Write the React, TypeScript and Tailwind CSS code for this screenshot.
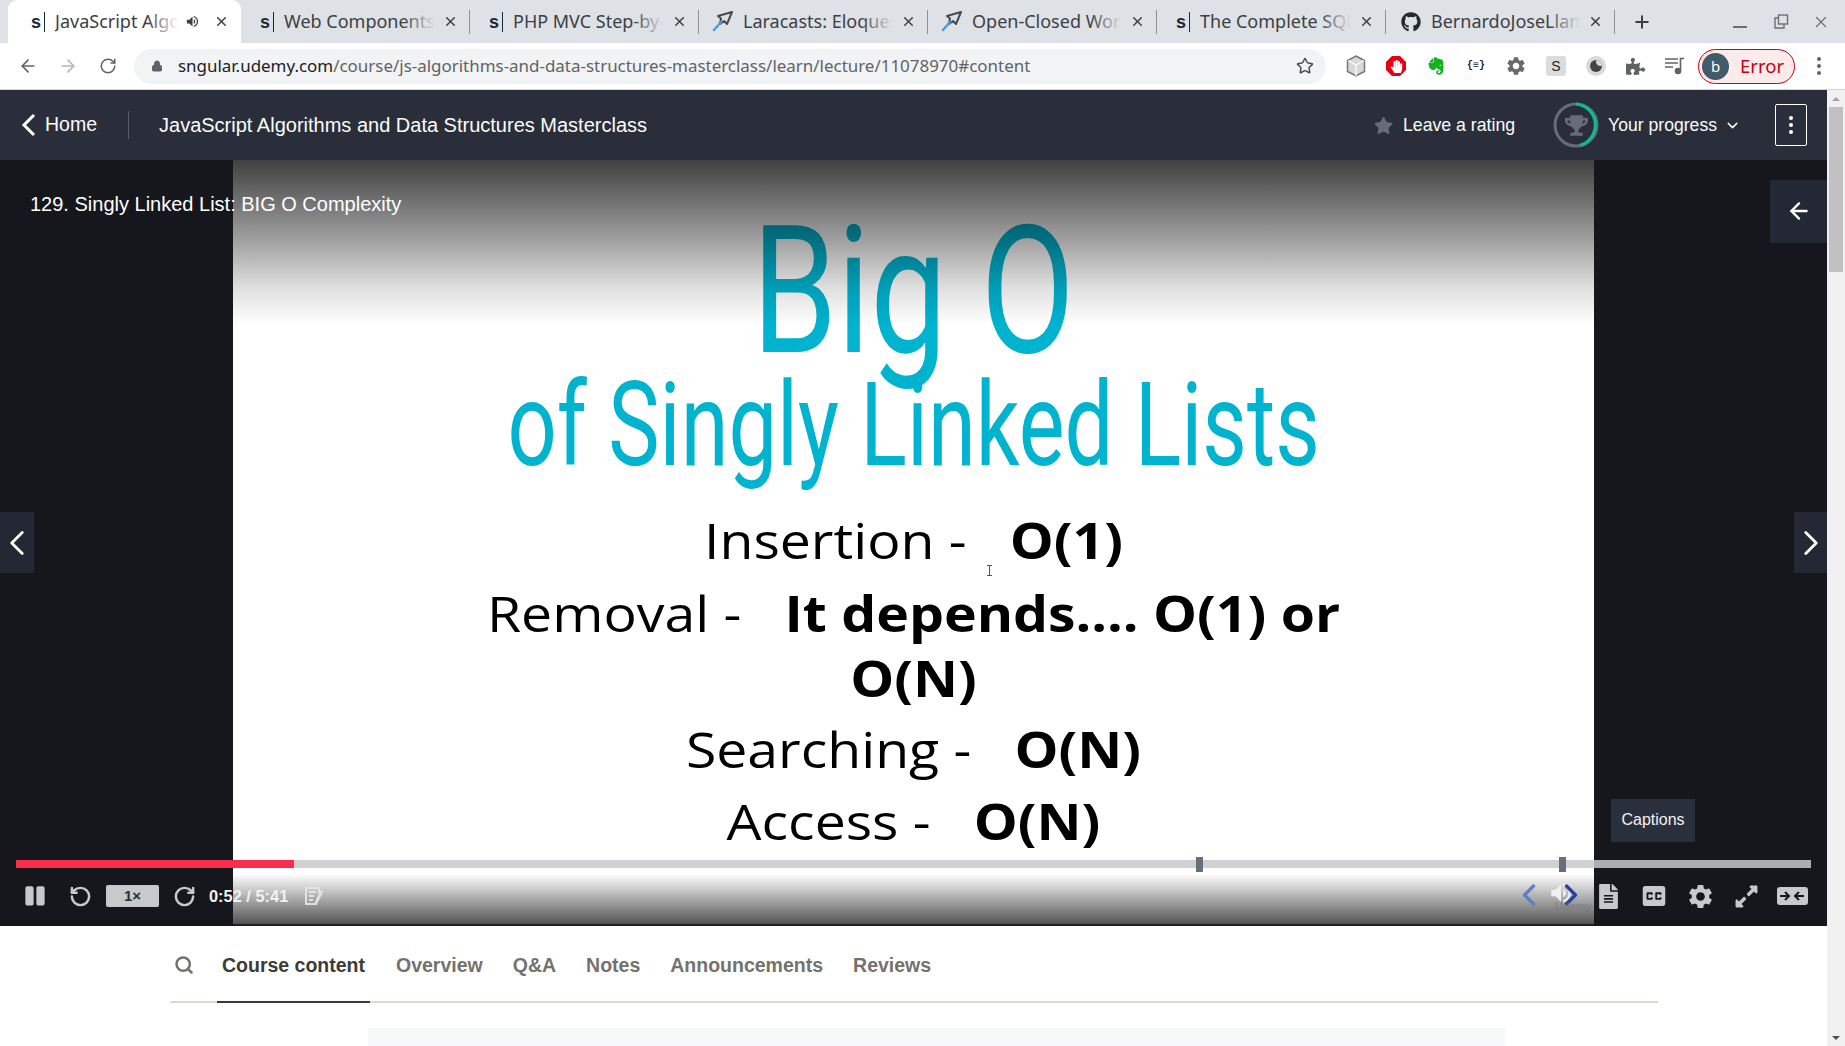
import { ArrowLeft, ArrowRight, ChevronDown, ChevronLeft, ChevronRight, Lock, Plus, RotateCcw, RotateCw, Search, Star, X } from 'lucide-react';
import { FaEvernote, FaFileAlt, FaGithub, FaHandPaper, FaPuzzlePiece, FaStar, FaTrophy, FaExpandAlt, FaPause } from 'react-icons/fa';
import { MdClosedCaption, MdSettings, MdVolumeUp } from 'react-icons/md';

function SFavicon() {
  return (
    <span className="flex w-[18px] shrink-0 items-center font-['Liberation_Sans',sans-serif] text-[18px] font-bold leading-none text-[#1c2a3a]">
      s<span className="ml-[3px] h-[20px] w-px bg-[#1c2a3a]" />
    </span>
  );
}

function PlaneFavicon() {
  return (
    <svg width="21" height="21" viewBox="0 0 21 21" className="-ml-[6px] mr-[4px] shrink-0">
      <path d="M20 1 6 5l3 2.500L8 13l4-3 3 3z" fill="none" stroke="#4a4a4a" strokeWidth="2" strokeLinejoin="round" />
      <path d="M9 11 2 19" stroke="#3f9be8" strokeWidth="2.500" strokeLinecap="round" strokeDasharray="3 2" />
    </svg>
  );
}

function BrowserTab({ title, icon, active, sound }: { title: string; icon: React.ReactNode; active?: boolean; sound?: boolean }) {
  return (
    <div className={active ? 'ml-2 flex h-[43px] w-[233px] items-center rounded-t-[9px] bg-white pl-[23px] pr-[12px]' : 'relative flex h-[43px] w-[229px] items-center pl-[19px] pr-[12px]'}>
      {icon}
      <div className="relative ml-[6px] min-w-0 flex-1 overflow-hidden whitespace-nowrap text-[18px] text-[#3c4043]">
        {title}
        <span className={active ? 'absolute inset-y-0 right-0 w-8 bg-gradient-to-r from-transparent to-white' : 'absolute inset-y-0 right-0 w-8 bg-gradient-to-r from-transparent to-[#dee1e6]'} />
      </div>
      {sound && <MdVolumeUp className="mx-[6px] shrink-0 text-[#3c4043]" size={15} />}
      <X className="ml-[8px] shrink-0 text-[#3c4043]" size={15} strokeWidth={2.4} />
      {!active && <span className="absolute right-0 top-[10px] h-[24px] w-px bg-[#8f9196]" />}
    </div>
  );
}

function TabStrip() {
  return (
    <div className="flex h-[43px] items-center bg-[#dee1e6] font-['Noto_Sans',sans-serif]">
      <BrowserTab active sound title="JavaScript Algorithms" icon={<SFavicon />} />
      <BrowserTab title="Web Components" icon={<SFavicon />} />
      <BrowserTab title="PHP MVC Step-by-Step" icon={<SFavicon />} />
      <BrowserTab title="Laracasts: Eloquent" icon={<PlaneFavicon />} />
      <BrowserTab title="Open-Closed Workflow" icon={<PlaneFavicon />} />
      <BrowserTab title="The Complete SQL" icon={<SFavicon />} />
      <BrowserTab title="BernardoJoseLlamas" icon={<FaGithub className="-ml-[4px] mr-[4px] shrink-0 text-[#24292e]" size={20} />} />
      <Plus className="ml-[17px] text-[#3c4043]" size={20} strokeWidth={2.4} />
      <div className="ml-auto flex items-center pr-[15px] text-[#6b6e73]">
        <span className="mt-[11px] h-[2px] w-[14px] bg-[#6b6e73]" />
        <svg width="15" height="15" viewBox="0 0 15 15" fill="none" stroke="currentColor" strokeWidth="1.4" className="ml-[27px]">
          <rect x="4.500" y="1" width="9" height="9" />
          <path d="M4.500 4H1v10h9v-4" />
        </svg>
        <X className="ml-[23px]" size={18} strokeWidth={1.6} />
      </div>
    </div>
  );
}

function ExtensionIcons() {
  return (
    <div className="ml-[20px] flex items-center gap-[20px]">
      <svg width="20" height="22" viewBox="0 0 20 22">
        <path d="M10 1 18.500 5.500v11L10 21l-8.500-4.500v-11z" fill="#d8d8d8" stroke="#777" strokeWidth="1.500" />
        <path d="M10 10 18 5.500M10 10v11M10 10 2 5.500" stroke="#fff" strokeWidth="1.200" fill="none" />
      </svg>
      <span className="flex h-[20px] w-[20px] items-center justify-center bg-[#e60012] [clip-path:polygon(30%_0,70%_0,100%_30%,100%_70%,70%_100%,30%_100%,0_70%,0_30%)]">
        <FaHandPaper className="text-white" size={13} />
      </span>
      <FaEvernote className="text-[#14b01f]" size={20} />
      <span className="w-[20px] text-center font-['Liberation_Mono',monospace] text-[10px] font-bold leading-none text-[#222]">{'{≡}'}</span>
      <MdSettings className="-mx-[1px] text-[#6a6a6a]" size={22} />
      <span className="flex h-[20px] w-[20px] items-center justify-center rounded-[3px] bg-[#dcdcdc] font-['Liberation_Sans',sans-serif] text-[14px] leading-none text-[#222]">S</span>
      <span className="flex h-[20px] w-[20px] items-center justify-center rounded-full bg-[#d9d9d9]">
        <span className="relative h-[12px] w-[12px] overflow-hidden rounded-full bg-[#444]">
          <span className="absolute -right-[3px] -top-[3px] h-[9px] w-[9px] rounded-full bg-[#d9d9d9]" />
        </span>
      </span>
      <FaPuzzlePiece className="text-[#5f6368]" size={19} />
      <svg width="20" height="18" viewBox="0 0 20 18" fill="none" stroke="#5f6368" strokeWidth="1.600">
        <path d="M0 2h13M0 6h13M0 10h8" />
        <circle cx="13" cy="14" r="2.500" fill="#5f6368" />
        <path d="M15.500 14V1.500H19" />
      </svg>
    </div>
  );
}

function Toolbar() {
  return (
    <div className="flex h-[47px] items-center border-b border-[#d2d4d8] bg-white pl-[18px] pr-[24px]">
      <ArrowLeft className="text-[#5f6368]" size={20} />
      <ArrowRight className="ml-[20px] text-[#b4b7bb]" size={20} />
      <RotateCw className="ml-[21px] text-[#5f6368]" size={18} />
      <div className="ml-[17px] flex h-[35px] w-[1192px] items-center rounded-full bg-[#f1f3f4] pl-[17px] pr-[12px] font-['Noto_Sans',sans-serif] text-[16.950px]">
        <Lock className="text-[#5f6368]" size={12} fill="#5f6368" />
        <span className="ml-[15px] whitespace-nowrap">
          <span className="text-[#202124]">sngular.udemy.com</span>
          <span className="text-[#5f6368]">/course/js-algorithms-and-data-structures-masterclass/learn/lecture/11078970#content</span>
        </span>
        <Star className="ml-auto text-[#4a4d52]" size={18} />
      </div>
      <ExtensionIcons />
      <div className="ml-[13px] flex h-[35px] w-[97px] items-center rounded-full border border-[#d50000] bg-[#fdeaea] pl-[3px] font-['Noto_Sans',sans-serif]">
        <span className="flex h-[27px] w-[27px] items-center justify-center rounded-full bg-[#425b6b] text-[15px] text-white">b</span>
        <span className="ml-[11px] text-[18.500px] text-[#c5000f]">Error</span>
      </div>
      <div className="ml-auto flex flex-col gap-[3px]">
        <span className="h-[4px] w-[4px] rounded-full bg-[#5f6368]" />
        <span className="h-[4px] w-[4px] rounded-full bg-[#5f6368]" />
        <span className="h-[4px] w-[4px] rounded-full bg-[#5f6368]" />
      </div>
    </div>
  );
}

function CourseHeader() {
  return (
    <header className="flex h-[70px] items-center bg-[#2a2e3b] pl-[21px] pr-[20px] font-['Liberation_Sans',sans-serif] text-[#fbfbf8]">
      <svg width="15" height="24" viewBox="0 0 15 24" fill="none" stroke="#fff" strokeWidth="3">
        <path d="M13 2 3 12l10 10" />
      </svg>
      <span className="ml-[9px] text-[19.500px]">Home</span>
      <span className="ml-[31px] h-[28px] w-px bg-[#5a5e69]" />
      <span className="ml-[30px] text-[20px]">JavaScript Algorithms and Data Structures Masterclass</span>
      <FaStar className="ml-auto text-[#686c78]" size={19} />
      <span className="ml-[10px] text-[17.700px]">Leave a rating</span>
      <div className="relative ml-[38px] flex h-[46px] w-[46px] items-center justify-center">
        <svg width="46" height="46" viewBox="0 0 46 46" className="absolute inset-0">
          <circle cx="23" cy="23" r="21" fill="none" stroke="#686c78" strokeWidth="3" />
          <path d="M23 2a21 21 0 0 1 4.500 41" fill="none" stroke="#00c48c" strokeWidth="3" />
        </svg>
        <FaTrophy className="text-[#686c78]" size={23} />
      </div>
      <span className="ml-[9px] text-[17.600px]">Your progress</span>
      <ChevronDown className="ml-[7px] text-white" size={17} />
      <div className="ml-[34px] flex h-[42px] w-[32px] flex-col items-center justify-center gap-[3px] rounded-[2px] border border-white">
        <span className="h-[4px] w-[4px] rounded-full bg-white" />
        <span className="h-[4px] w-[4px] rounded-full bg-white" />
        <span className="h-[4px] w-[4px] rounded-full bg-white" />
      </div>
    </header>
  );
}

function Slide() {
  return (
    <div className="relative h-full w-[1361px] overflow-hidden bg-white text-center">
      <div className="flex flex-col items-center text-[#00b3cf]">
        <div className="mt-[42px] scale-x-[0.767] whitespace-nowrap font-['Roboto',sans-serif] text-[178px] leading-[178px]">Big O</div>
        <div className="-mt-[13px] scale-x-[0.739] whitespace-pre font-['Roboto',sans-serif] text-[117px] leading-[117px]">of Singly Linked Lists</div>
      </div>
      <div className="scale-x-[1.107] whitespace-pre font-['Open_Sans',sans-serif] text-[50px] leading-[65px] text-black">
        <div className="mt-[24px]">Insertion -   <b>O(1)</b></div>
        <div className="mt-[8px]">
          Removal -   <b>It depends…. O(1) or</b>
          <br />
          <b>O(N)</b>
        </div>
        <div className="mt-[6px]">Searching -   <b>O(N)</b></div>
        <div className="mt-[7px]">Access -   <b>O(N)</b></div>
      </div>
      {/* top and bottom shade only darken the frame, the side bars stay flat */}
      <div className="absolute inset-x-0 top-0 h-[165px] bg-[linear-gradient(to_bottom,rgba(0,0,0,0.75),rgba(0,0,0,0.36)_50%,rgba(0,0,0,0.12)_78%,transparent)]" />
      <div className="absolute inset-x-0 bottom-0 h-[52px] bg-gradient-to-t from-black/70 to-transparent" />
      <div className="absolute inset-x-0 bottom-0 h-[2px] bg-[#2a1a20]" />
      <svg width="7" height="11" viewBox="0 0 7 11" className="absolute left-[753px] top-[405px]" fill="none" stroke="#555" strokeWidth="1">
        <path d="M1 .5h5M1 10.500h5M3.500 .5v10" />
      </svg>
    </div>
  );
}

function PlayerControls() {
  const iconColor = 'text-[#c8c9cd]';
  return (
    <div className="absolute inset-x-0 bottom-0 px-[16px] pb-[18px] font-['Liberation_Sans',sans-serif]">
      <div className="relative h-[8px] bg-[#c8c9cd]/85">
        <div className="h-full w-[278px] bg-[#fb2d4f]" />
        <span className="absolute -top-[3px] left-[1180px] h-[15px] w-[7px] bg-[#686f7a]" />
        <span className="absolute -top-[3px] left-[1543px] h-[15px] w-[7px] bg-[#686f7a]" />
      </div>
      <div className="mt-[16px] flex h-[24px] items-center">
        <FaPause className={`ml-[8px] ${iconColor}`} size={22} />
        <RotateCcw className={`ml-[23px] ${iconColor}`} size={23} strokeWidth={2.6} />
        <span className="ml-[14px] flex h-[22px] w-[53px] items-center justify-center rounded-[2px] bg-[#c8c9cd] text-[15px] font-bold text-[#29303b]">1×</span>
        <RotateCw className={`ml-[14px] ${iconColor}`} size={23} strokeWidth={2.6} />
        <span className="ml-[13px] text-[16.400px] font-bold text-[#f2f2f2]">0:52 / 5:41</span>
        <svg width="20" height="20" viewBox="0 0 20 20" className="ml-[16px] text-[#e2e2e2]" fill="none" stroke="currentColor" strokeWidth="2">
          <path d="M15 7V2H2v16h11M5 6h7M5 10h5M5 14h4" />
          <path d="M18 5 12 17" strokeWidth="3" />
        </svg>
        <div className="relative -mr-[4px] ml-auto flex items-center">
          <ChevronLeft className="absolute -left-[74px] -top-[4px] text-[#5f7fc4]" size={36} strokeWidth={2.2} />
          <MdVolumeUp className="absolute -left-[37px] -top-[1px] text-[#f0f0f0]" size={26} />
          <ChevronRight className="absolute -left-[32px] -top-[4px] text-[#26409f]" size={36} strokeWidth={2.2} />
          <span className="absolute -left-[30px] top-[17px] text-[11px] font-bold text-[#777]/60">Udemy</span>
          <span className="flex w-[46px] justify-center"><FaFileAlt className={iconColor} size={25} /></span>
          <span className="flex w-[46px] justify-center"><MdClosedCaption className={iconColor} size={30} /></span>
          <span className="flex w-[46px] justify-center"><MdSettings className={iconColor} size={29} /></span>
          <span className="flex w-[46px] justify-center"><FaExpandAlt className={iconColor} size={25} /></span>
          <span className="flex w-[46px] justify-center">
            <span className="flex h-[18px] w-[31px] items-center justify-center rounded-[3px] bg-[#c8c9cd] text-[#16171c]">
              <svg width="26" height="12" viewBox="0 0 26 12" fill="none" stroke="currentColor" strokeWidth="2">
                <path d="M1 6h9M6 2l4 4-4 4M25 6h-9M20 2l-4 4 4 4" />
              </svg>
            </span>
          </span>
        </div>
      </div>
    </div>
  );
}

function VideoPlayer() {
  return (
    <section className="relative flex h-[766px] justify-center bg-[#16171c] font-['Liberation_Sans',sans-serif]">
      <Slide />
      <div className="absolute left-[30px] top-[32px] text-[20px] leading-[24px] text-white">129. Singly Linked List: BIG O Complexity</div>
      <div className="absolute right-0 top-[20px] flex h-[63px] w-[57px] items-center justify-center bg-[#232834] pb-[2px]">
        <ArrowLeft className="text-white" size={26} strokeWidth={2.2} />
      </div>
      <div className="absolute left-0 top-[352px] flex h-[61px] w-[34px] items-center justify-center bg-[#232834]">
        <ChevronLeft className="shrink-0 text-white" size={42} strokeWidth={1.6} />
      </div>
      <div className="absolute right-0 top-[352px] flex h-[61px] w-[33px] items-center justify-center bg-[#232834]">
        <ChevronRight className="shrink-0 text-white" size={42} strokeWidth={1.6} />
      </div>
      <div className="absolute left-[1611px] top-[639px] flex h-[43px] w-[84px] items-center justify-center bg-[#29303b] pb-[2px] text-[16px] text-[#f2f2f2]">Captions</div>
      <PlayerControls />
    </section>
  );
}

function CourseTabs() {
  const tabs = ['Overview', 'Q&A', 'Notes', 'Announcements', 'Reviews'];
  return (
    <div className="bg-white font-['Liberation_Sans',sans-serif]">
      <nav className="ml-[170px] flex h-[77px] w-[1488px] items-stretch border-b-2 border-[#dcdacb] text-[19.500px] font-bold text-[#73726c]">
        <div className="flex w-[47px] items-center pl-[4px] pt-[2px]">
          <Search size={20} strokeWidth={3} />
        </div>
        <div className="-mb-[2px] flex items-center border-b-[2px] border-[#3c3b37] px-[5px] pt-[4px] text-[#3c3b37]">Course content</div>
        <div className="ml-[21px] flex gap-[20px]">
          {tabs.map((tab) => (
            <div key={tab} className="flex items-center px-[5px] pt-[4px]">
              {tab}
            </div>
          ))}
        </div>
      </nav>
      <div className="ml-[368px] mt-[25px] h-[18px] w-[1137px] bg-[#f7f8fa]" />
    </div>
  );
}

function Scrollbar() {
  return (
    <div className="flex w-[18px] shrink-0 flex-col items-center justify-between bg-[#f1f1f1]">
      <div className="flex w-full flex-col items-center">
        <span className="mt-[7px] border-x-[4px] border-b-[4px] border-x-transparent border-b-[#a3a3a3]" />
        <div className="mt-[6px] h-[165px] w-[14px] bg-[#c1c1c1]" />
      </div>
      <span className="mb-[6px] border-x-[4px] border-t-[4px] border-x-transparent border-t-[#505050]" />
    </div>
  );
}

export default function App() {
  return (
    <div className="flex h-[1046px] w-[1845px] flex-col overflow-hidden bg-white">
      <TabStrip />
      <Toolbar />
      <div className="flex min-h-0 flex-1">
        <main className="min-w-0 flex-1">
          <CourseHeader />
          <VideoPlayer />
          <CourseTabs />
        </main>
        <Scrollbar />
      </div>
    </div>
  );
}
